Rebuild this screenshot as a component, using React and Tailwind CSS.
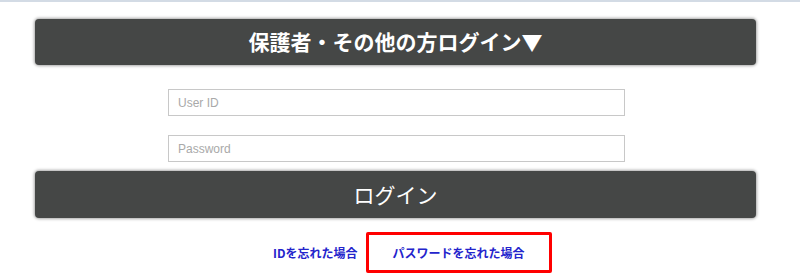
const jp = { fontFamily: '"Noto Sans CJK JP", "Noto Sans", sans-serif' };
const latin = { fontFamily: '"Liberation Sans", Arial, sans-serif' };

const DarkButton = ({ children, className = '' }) => (
  <div
    className={`ml-[35px] w-[721px] flex items-center justify-center rounded-[4px] bg-[#454746] text-white shadow-[0_0_3px_1px_rgba(0,0,0,0.35)] ${className}`}
    style={jp}
  >
    {children}
  </div>
);

const TextField = ({ placeholder, type = 'text' }) => (
  <input
    type={type}
    placeholder={placeholder}
    className="ml-[168px] block w-[457px] h-[27px] border border-[#c8c8c8] bg-white px-[9px] text-[12px] text-[#333] placeholder:text-[#a9a9a9] outline-none"
    style={latin}
  />
);

export default function App() {
  return (
    <div className="w-[800px] h-[280px] bg-white overflow-hidden border-t-2 border-[#d3dbe5]">
      <DarkButton className="mt-[17px] h-[46px] text-[21px] font-bold">
        保護者・その他の方ログイン▼
      </DarkButton>

      <div className="mt-[24px]">
        <TextField placeholder="User ID" />
      </div>
      <div className="mt-[19px]">
        <TextField placeholder="Password" type="password" />
      </div>

      <DarkButton className="mt-[9px] h-[47px] text-[21px]">ログイン</DarkButton>

      <div className="mt-[14px] flex items-center" style={jp}>
        <a href="#" className="ml-[273px] text-[12px] font-bold text-[#2424cc]">
          IDを忘れた場合
        </a>
        <div className="ml-[8px] w-[186px] h-[41px] flex items-center justify-center border-[3px] border-[#ff0000] rounded-[2px]">
          <a href="#" className="text-[12px] font-bold text-[#2424cc]">
            パスワードを忘れた場合
          </a>
        </div>
      </div>
    </div>
  );
}
